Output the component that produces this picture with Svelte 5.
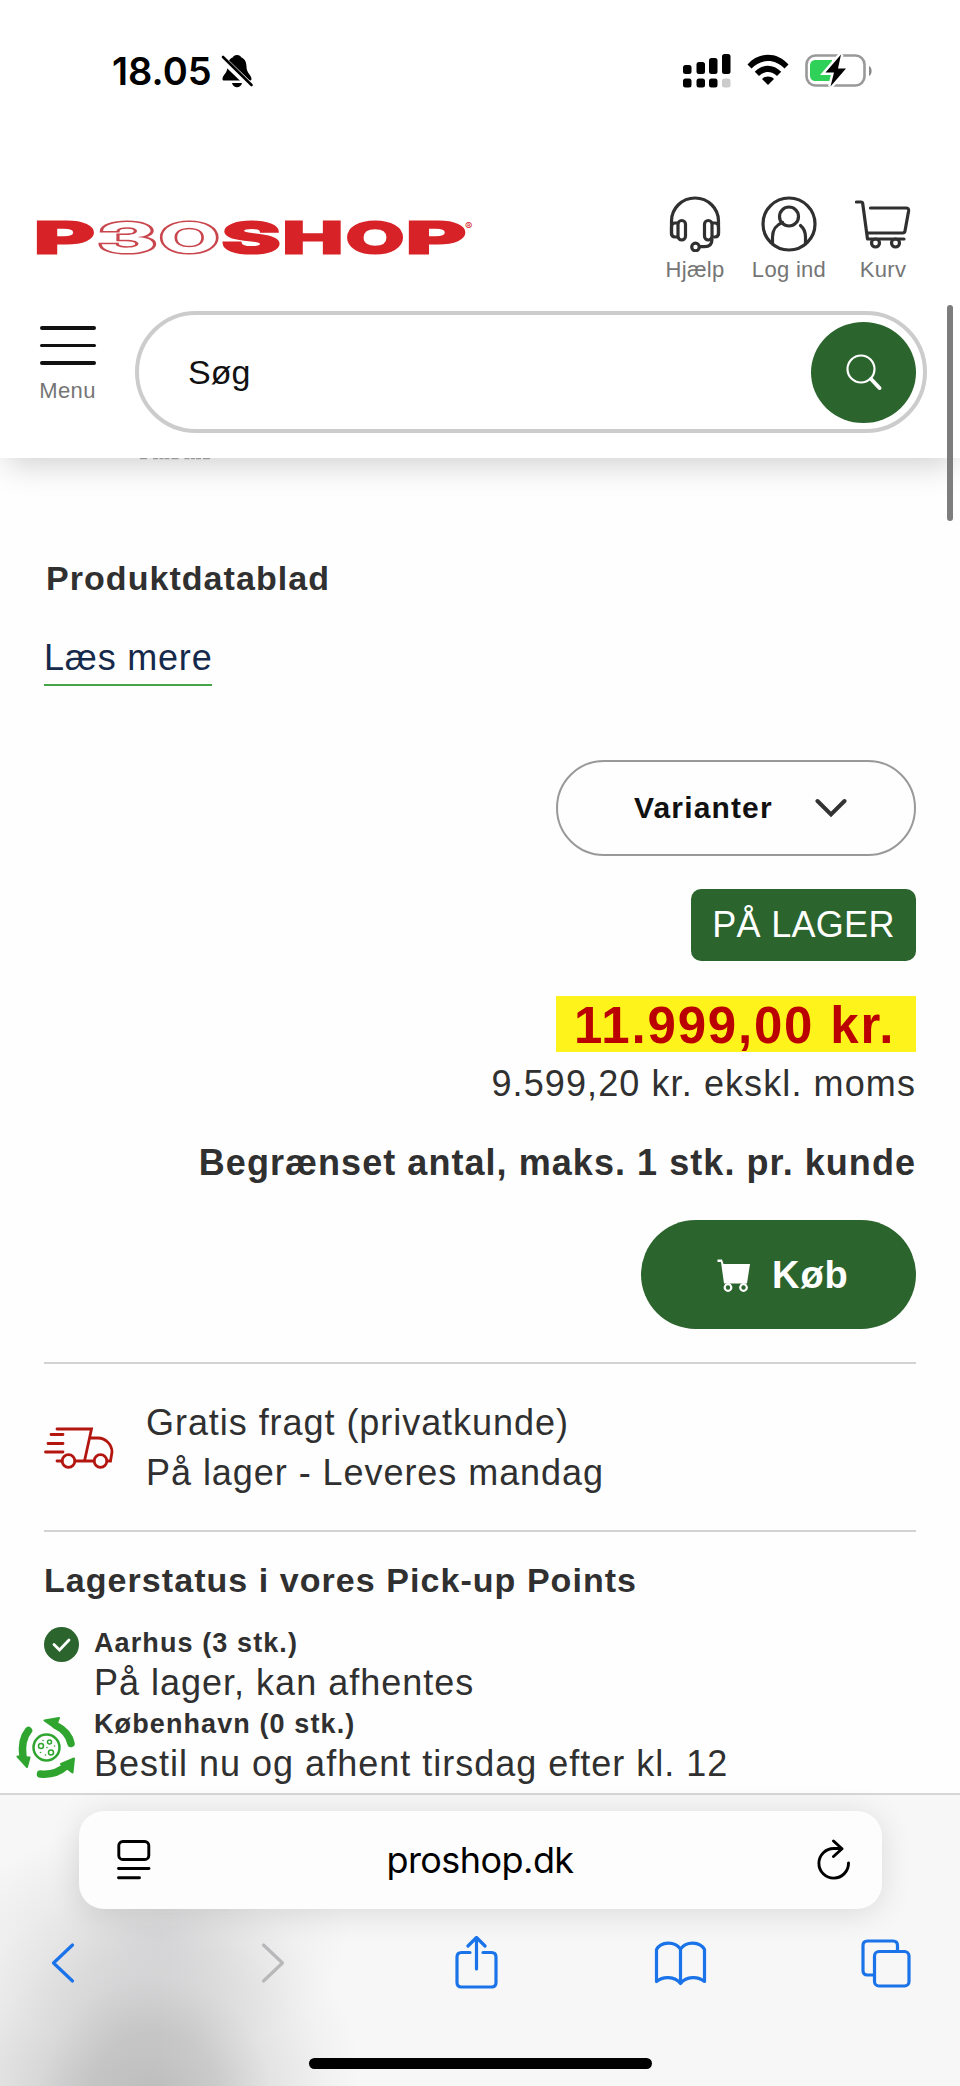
<script lang="ts">
  let query = $state("");

  const signal = [
    { x: 0, y: 11, h: 9 },
    { x: 13.5, y: 8, h: 12 },
    { x: 26, y: 4, h: 16 },
    { x: 39, y: 0, h: 20 },
  ];

  const logo = [
    { letter: "P", x: -4.1, width: 60.3, kind: "solid" },
    { letter: "3", x: 59.3, width: 60, kind: "outline" },
    { letter: "O", x: 121, width: 60.5, kind: "outline" },
    { letter: "S", x: 184, width: 58.2, kind: "solid" },
    { letter: "H", x: 244.6, width: 60.7, kind: "solid" },
    { letter: "O", x: 308.2, width: 57.6, kind: "solid" },
    { letter: "P", x: 368, width: 59.7, kind: "solid" },
  ];

  const stores = [
    { name: "Aarhus", count: 3, status: "På lager, kan afhentes", ready: true },
    { name: "København", count: 0, status: "Bestil nu og afhent tirsdag efter kl. 12", ready: false },
  ];
</script>

<main>
  <header>
    <div class="statusbar">
      <div class="clock">
        <span>18.05</span>
        <svg width="32" height="34" viewBox="0 0 32 34">
          <path d="M16 1c-2.500 0-3.500 1-4 2.200C7.500 5 6.500 9 6.500 13c0 6-5 8-5 12 0 1 .7 1.600 1.700 1.600h25.600c1 0 1.700-.6 1.700-1.600 0-4-5-6-5-12 0-4-1-8-5.500-9.800C19.500 2 18.500 1 16 1z" />
          <path d="M11 29h10c-.5 2.500-2.500 4.300-5 4.300S11.500 31.500 11 29z" />
          <path d="M-1 2.500L30 32.500" stroke="#fff" stroke-width="7" />
          <path d="M2 3L30.500 31" stroke="#000" stroke-width="2.600" stroke-linecap="round" />
        </svg>
      </div>
      <div class="indicators">
        <svg width="50" height="34" viewBox="0 0 50 34">
          {#each signal as bar, i}
            <rect x={bar.x} y={bar.y} width="8.500" height={bar.h} rx="2.500" />
            <rect x={bar.x} y="24.500" width="8.500" height="9" rx="2.500" fill={i === 3 ? "#ccc" : "#000"} />
          {/each}
        </svg>
        <svg width="42" height="32" viewBox="0 0 42 32">
          <path d="M0.500 10.500C12-2.500 30-2.500 41.500 10.500L37.500 14.500C28 4.500 14 4.500 4.500 14.500z" />
          <path d="M7.800 17.800C15.500 9.800 26.500 9.800 34.200 17.800L30 22C24.500 16.700 17.500 16.700 12 22z" />
          <path d="M15 25C18.500 21.800 23.500 21.800 27 25L21 31z" />
        </svg>
        <svg class="battery" width="68" height="34" viewBox="0 0 68 34" fill="none">
          <rect x="1.500" y="1.500" width="58" height="30" rx="9" stroke="#999" stroke-width="2.600" />
          <path d="M64 12c3.500 1.500 3.500 8.500 0 10z" fill="#888" />
          <path d="M11 6h16v21H11c-4 0-6-2-6-6V12c0-4 2-6 6-6z" fill="#30d158" />
          <path d="M36 0.500L20.500 18.500H29L25.500 32.500 41 14.500H33z" fill="#000" stroke="#fff" stroke-width="5" paint-order="stroke" />
        </svg>
      </div>
    </div>

    <div class="brandrow">
      <svg class="logo" width="446" height="50" viewBox="0 0 446 50">
        {#each logo as part}
          <text class={part.kind} x={part.x} y="40.500" textLength={part.width} lengthAdjust="spacingAndGlyphs">{part.letter}</text>
        {/each}
        <text class="reg" x="427" y="18">®</text>
      </svg>
      <nav>
        <a href="#help">
          <svg width="56" height="56" viewBox="0 0 56 56">
            <path d="M5 38V24.500a23.500 23 0 0 1 47 0V38" transform="translate(-.5 .5)" />
            <path d="M10.500 27H8q-3.500 0-3.500 4v6q0 4 3.500 4h2.500M45.500 27H48q3.500 0 3.500 4v6q0 4-3.500 4h-2.500" />
            <rect x="11" y="24.500" width="7.500" height="19.500" rx="3.700" />
            <rect x="37.500" y="24.500" width="7.500" height="19.500" rx="3.700" />
            <path d="M45 43.500c0 5-2.500 7.200-7.500 7.200H33" />
            <circle cx="28.500" cy="51" r="3.800" />
          </svg>
          <span>Hjælp</span>
        </a>
        <a href="#login">
          <svg width="56" height="56" viewBox="0 0 56 56">
            <circle cx="28" cy="28" r="26" />
            <circle cx="28" cy="20.500" r="9.500" />
            <path d="M11.500 48V41c0-7 4-12.500 10-14.500M44.500 48V41c0-5-1.500-8.500-5-11.500" />
          </svg>
          <span>Log ind</span>
        </a>
        <a href="#cart">
          <svg width="56" height="56" viewBox="0 0 56 56">
            <path d="M1.500 6H6q1.500 0 1.700 1.500L12.500 43H49" />
            <path d="M15.500 12H51q3 0 2.600 3L50 35q-.4 2-2.400 2H12.500" />
            <circle cx="20.500" cy="47" r="4" />
            <circle cx="40.500" cy="47" r="4" />
          </svg>
          <span>Kurv</span>
        </a>
      </nav>
    </div>

    <div class="searchrow">
      <button class="menu">
        <i></i><i></i><i></i>
        <span>Menu</span>
      </button>
      <div class="search">
        <input bind:value={query} placeholder="Søg" />
        <button aria-label="Søg">
          <svg width="38" height="38" viewBox="0 0 38 38" fill="none" stroke="#fff" stroke-linecap="round">
            <circle cx="16" cy="16" r="13.500" stroke-width="2.200" />
            <path d="M26 26l8.500 9" stroke-width="4" />
          </svg>
        </button>
      </div>
    </div>
  </header>

  <section class="product">
    <svg class="clipped" width="74" height="2" viewBox="0 0 74 2">
      <path d="M0 .7h74" stroke="#888" stroke-dasharray="7 6 5 1.500 4 1 5 2" />
    </svg>
    <h2 class="datasheet">Produktdatablad</h2>
    <a class="more" href="#more">Læs mere</a>

    <div class="buy">
      <button class="variants">
        Varianter
        <svg width="32" height="20" viewBox="0 0 32 20">
          <path d="M2.500 3L16 16.500 29.500 3" fill="none" stroke="#333" stroke-width="4" stroke-linecap="round" />
        </svg>
      </button>
      <div class="stock">PÅ LAGER</div>
      <div class="price">11.999,00 kr.</div>
      <div class="exvat">9.599,20 kr. ekskl. moms</div>
      <div class="limit">Begrænset antal, maks. 1 stk. pr. kunde</div>
      <button class="add">
        <svg width="34" height="34" viewBox="0 0 34 34">
          <path d="M.5.500H5L6.500 5H33L30 24.500H7L4 3H.5z" fill="#fff" />
          <circle cx="11" cy="28.500" r="3.300" />
          <circle cx="26.500" cy="28.500" r="3.300" />
        </svg>
        Køb
      </button>
    </div>

    <div class="shipping">
      <svg width="70" height="42" viewBox="0 0 70 42" fill="none" stroke="#b3150f" stroke-width="2.800" stroke-linecap="round">
        <path d="M13 2H47.500L40.500 34M46 11H54c8 0 14 7 14 14L66.500 34H63M50 34H31M18 34H13" />
        <path d="M7 7.500H19M4 16.500H19M1.500 25H19" />
        <circle cx="24.500" cy="34" r="6.300" />
        <circle cx="56.500" cy="34" r="6.300" />
      </svg>
      <div>Gratis fragt (privatkunde)<br />På lager - Leveres mandag</div>
    </div>

    <h2 class="pickup">Lagerstatus i vores Pick-up Points</h2>
    <ul>
      {#each stores as store}
        <li>
          <div class="mark">
            {#if store.ready}
              <svg width="35" height="35" viewBox="0 0 35 35">
                <circle cx="17.500" cy="17.500" r="17.500" fill="#2b642d" />
                <path d="M10 17.500l5.500 5.500L25 13" fill="none" stroke="#fff" stroke-width="2.800" stroke-linecap="round" />
              </svg>
            {/if}
          </div>
          <div>
            <b>{store.name} ({store.count} stk.)</b>
            <p>{store.status}</p>
          </div>
        </li>
      {/each}
    </ul>

    <!-- cookie settings button -->
    <svg class="cookie" width="60" height="62" viewBox="0 0 60 62">
      <g fill="none" stroke="#2fa52f" stroke-width="7.500" stroke-linecap="round">
        <path d="M40 8.500C48 12.500 53.500 19 55 26.500" />
        <path d="M24.500 57C35 58 44 54.500 50 49" />
        <path d="M12.500 13.500C7 20 5.500 29 7 40" />
      </g>
      <path d="M28.500 3.500l14.500-2.500-4 10zM45 47l13-5.500-1.500 14zM1.500 39.500l12 1-2.500 9.500z" fill="#2fa52f" stroke="#2fa52f" stroke-width="2" stroke-linejoin="round" />
      <g fill="none" stroke="#2fa52f">
        <circle cx="30.500" cy="30.500" r="13" stroke-width="2.500" />
        <circle cx="25" cy="29" r="2.500" stroke-width="1.500" />
        <circle cx="33.500" cy="25" r="2" stroke-width="1.500" />
        <circle cx="35" cy="35.500" r="2.500" stroke-width="1.500" />
      </g>
      <g fill="#2fa52f">
        <circle cx="27" cy="23.500" r=".8" /><circle cx="31" cy="30.500" r=".8" /><circle cx="24.500" cy="35.500" r=".8" />
        <circle cx="38.500" cy="29" r=".8" /><circle cx="29.500" cy="38" r=".8" />
      </g>
    </svg>
  </section>

  <footer>
    <div class="address">
      <svg width="34" height="40" viewBox="0 0 34 40">
        <rect x="1.800" y="1.500" width="30" height="18" rx="4" />
        <path d="M1.500 28.500h30.500M1.500 37.800h21" />
      </svg>
      <span>proshop.dk</span>
      <svg width="34" height="42" viewBox="0 0 34 42">
        <path d="M31.500 24A14.800 14.800 0 1 1 17 9.500h7" />
        <path d="M16.500 2L25 9.800 16.500 17.500" />
      </svg>
    </div>
    <div class="tools">
      <svg width="54" height="54" viewBox="-15 0 54 54"><path d="M21.500 9L2.500 27l19 18" /></svg>
      <svg width="54" height="54" viewBox="-19 0 54 54" class="off"><path d="M2.500 9l19 18-19 18" /></svg>
      <svg width="54" height="54" viewBox="-6.500 0 54 54">
        <path d="M15.500 16.500H7q-4.500 0-4.500 4.500V46.500q0 4.500 4.500 4.500H37q4.500 0 4.500-4.500V21q0-4.500-4.500-4.500H28.500M22 33V2M13.500 10L22 1.500 30.500 10" />
      </svg>
      <svg width="54" height="54" viewBox="-1 0 54 54">
        <path d="M26.500 47.500C20.500 40 9 40 2.500 45.500V13.500C7 5 21 5 26.500 13 32 5 46 5 50.500 13.500V45.500C44 40 32.500 40 26.500 47.500zM26.500 13V47" />
      </svg>
      <svg width="54" height="54" viewBox="-2 0 54 54">
        <path d="M12.500 39H6.500q-4.500 0-4.500-4.500V9.500Q2 5 6.500 5H32q4.500 0 4.500 4.500V15" />
        <rect x="13.500" y="15.500" width="34.500" height="34.500" rx="4.500" />
      </svg>
    </div>
    <div class="home"></div>
  </footer>

  <div class="scrollbar"></div>
</main>

<style>
  :global(body) {
    margin: 0;
    background: #fff;
  }

  main {
    position: relative;
    display: flex;
    flex-direction: column;
    width: 960px;
    height: 2086px;
    overflow: hidden;
    font-family: "Liberation Sans", Arial, sans-serif;
    font-size: 36px;
    letter-spacing: 0.95px;
    color: #303030;
    background: #fefefe;
  }

  h2, p, ul {
    margin: 0;
    padding: 0;
  }

  button {
    border: none;
    padding: 0;
    font: inherit;
    letter-spacing: inherit;
    background: none;
  }

  a {
    color: inherit;
    text-decoration: none;
  }

  svg {
    display: block;
    flex-shrink: 0;
  }

  header {
    position: relative;
    z-index: 1;
    box-sizing: border-box;
    height: 458px;
    flex-shrink: 0;
    background: #fff;
    box-shadow: 0 14px 30px -7px rgba(0, 0, 0, 0.18);
  }

  .statusbar {
    display: flex;
    justify-content: space-between;
    box-sizing: border-box;
    height: 196px;
    padding: 48px 87px 0 112px;
  }

  .clock {
    display: flex;
    gap: 9px;
    height: 46px;
    font: 600 38px/46px Inter, sans-serif;
    letter-spacing: 0;
    color: #000;
  }

  .clock svg {
    margin-top: 6px;
    overflow: visible;
  }

  .indicators {
    display: flex;
    gap: 14px;
    height: 46px;
    padding-top: 6px;
  }

  .battery {
    margin-left: 2px;
  }

  .brandrow {
    display: flex;
    justify-content: space-between;
    height: 115px;
    padding: 0 35px 0 38px;
  }

  .logo {
    margin-top: 16px;
    overflow: visible;
  }

  .logo text {
    font-family: Inter, sans-serif;
    font-weight: 700;
    font-size: 43px;
    letter-spacing: 0;
  }

  .solid {
    fill: #d72328;
    stroke: #d72328;
    stroke-width: 3px;
  }

  .outline {
    fill: #fff;
    stroke: #c9464d;
    stroke-width: 3px;
    paint-order: stroke;
  }

  .logo .reg {
    font-size: 11px;
    font-weight: normal;
    fill: #d72328;
  }

  nav {
    display: flex;
    gap: 10px;
  }

  nav a {
    display: flex;
    flex-direction: column;
    align-items: center;
    width: 84px;
    font-size: 22px;
    line-height: 24px;
    letter-spacing: 0.3px;
    color: #757575;
  }

  nav span {
    margin-top: 6px;
  }

  nav svg {
    fill: none;
    stroke: #303030;
    stroke-width: 3.2px;
    stroke-linecap: round;
    stroke-linejoin: round;
  }

  .searchrow {
    display: flex;
    gap: 39px;
    padding: 0 33px 0 39px;
  }

  .menu {
    display: flex;
    flex-direction: column;
    align-items: center;
    width: 57px;
    padding-top: 15px;
    font-size: 22px;
    line-height: 24px;
    letter-spacing: 0.4px;
    color: #757575;
  }

  .menu i {
    width: 56px;
    height: 3.5px;
    margin-bottom: 14px;
    border-radius: 2px;
    background: #111;
  }

  .search {
    display: flex;
    align-items: center;
    box-sizing: border-box;
    flex: 1;
    height: 122px;
    padding: 0 7px 0 49px;
    border: 4px solid #ccc;
    border-radius: 61px;
    background: #fff;
  }

  .search input {
    flex: 1;
    min-width: 0;
    border: none;
    padding: 0;
    outline: none;
    font: 34px "Liberation Sans", Arial, sans-serif;
    letter-spacing: 0;
    background: none;
  }

  .search input::placeholder {
    color: #111;
    opacity: 1;
  }

  .search button {
    display: grid;
    place-items: center;
    width: 105px;
    height: 101px;
    border-radius: 50%;
    background: #2b642d;
  }

  .product {
    position: relative;
    box-sizing: border-box;
    height: 1335px;
    flex-shrink: 0;
    padding: 0 44px;
  }

  .clipped {
    position: absolute;
    z-index: 2;
    left: 140px;
    top: 0;
  }

  h2 {
    font-size: 34px;
    letter-spacing: 1.05px;
  }

  .datasheet {
    padding: 100px 0 0 2px;
    line-height: 40px;
  }

  .more {
    display: block;
    width: fit-content;
    margin-top: 39px;
    padding-bottom: 5px;
    border-bottom: 2px solid #46a546;
    line-height: 42px;
    letter-spacing: 0.8px;
    color: #15294b;
  }

  .buy {
    display: flex;
    flex-direction: column;
    align-items: flex-end;
    box-sizing: border-box;
    height: 678px;
    padding-top: 74px;
    border-bottom: 2px solid #d2d2d2;
  }

  .variants {
    display: flex;
    align-items: center;
    gap: 42px;
    box-sizing: border-box;
    flex-shrink: 0;
    width: 360px;
    height: 96px;
    padding-left: 76px;
    border: 2px solid #999;
    border-radius: 48px;
    font-size: 30px;
    font-weight: bold;
    letter-spacing: 1.15px;
    color: #111;
  }

  .stock {
    flex-shrink: 0;
    width: 225px;
    height: 72px;
    margin-top: 33px;
    border-radius: 10px;
    text-align: center;
    line-height: 71px;
    letter-spacing: 0.3px;
    color: #fff;
    background: #2b642d;
  }

  .price {
    box-sizing: border-box;
    flex-shrink: 0;
    width: 360px;
    height: 56px;
    margin-top: 35px;
    padding: 2px 0 0 18px;
    font-size: 51px;
    font-weight: bold;
    line-height: 56px;
    letter-spacing: 1.8px;
    color: #ba0000;
    background: #fff31c;
  }

  .exvat {
    margin-top: 10px;
    line-height: 44px;
    letter-spacing: 1.1px;
  }

  .limit {
    margin-top: 35px;
    font-weight: bold;
    line-height: 44px;
    letter-spacing: 1.05px;
  }

  .add {
    display: flex;
    align-items: center;
    gap: 21px;
    box-sizing: border-box;
    flex-shrink: 0;
    width: 275px;
    height: 109px;
    margin-top: 35px;
    padding: 2px 0 0 76px;
    border-radius: 55px;
    font-size: 38px;
    font-weight: bold;
    color: #fff;
    background: #2b642d;
  }

  .add circle {
    fill: #2b642d;
    stroke: #fff;
    stroke-width: 2.2px;
  }

  .shipping {
    display: flex;
    gap: 32px;
    padding: 34px 0 32px;
    border-bottom: 2px solid #d2d2d2;
    line-height: 50px;
  }

  .shipping svg {
    margin-top: 29px;
  }

  .pickup {
    margin-top: 26px;
    line-height: 44px;
  }

  ul {
    display: flex;
    flex-direction: column;
    gap: 2px;
    margin-top: 23px;
    list-style: none;
  }

  li {
    display: flex;
    gap: 15px;
  }

  .mark {
    width: 35px;
    padding-top: 2px;
  }

  li b {
    display: block;
    font-size: 27px;
    line-height: 37px;
    letter-spacing: 1.1px;
  }

  li p {
    line-height: 42px;
    letter-spacing: 1px;
  }

  .cookie {
    position: absolute;
    left: 16px;
    top: 1259px;
  }

  footer {
    display: flex;
    flex-direction: column;
    align-items: center;
    flex: 1;
    border-top: 2px solid #d6d6d8;
    background:
      radial-gradient(ellipse 210px 215px at 155px 300px, rgba(100, 100, 102, 0.34), rgba(105, 105, 108, 0.27) 30%, rgba(115, 115, 120, 0.12) 55%, rgba(120, 120, 125, 0.03) 82%, transparent),
      radial-gradient(ellipse 300px 230px at 60px 290px, rgba(140, 140, 142, 0.18), rgba(150, 150, 150, 0.06) 60%, transparent),
      radial-gradient(ellipse 190px 120px at 160px 140px, rgba(150, 150, 156, 0.26), rgba(150, 150, 156, 0.1) 55%, transparent),
      #f7f7f7;
  }

  .address {
    display: flex;
    align-items: center;
    justify-content: space-between;
    box-sizing: border-box;
    width: 803px;
    height: 98px;
    margin-top: 16px;
    padding: 0 31px 0 38px;
    border-radius: 25px;
    font-family: Inter, sans-serif;
    letter-spacing: -0.55px;
    color: #000;
    background: #fdfdfd;
    box-shadow: 0 4px 32px rgba(0, 0, 0, 0.12);
  }

  .address span {
    margin-right: 7px;
  }

  .address svg {
    fill: none;
    stroke: #000;
    stroke-width: 2.9px;
    stroke-linecap: round;
    stroke-linejoin: round;
  }

  .tools {
    display: flex;
    justify-content: space-between;
    box-sizing: border-box;
    width: 100%;
    margin-top: 27px;
    padding: 0 47px 0 36px;
  }

  .tools svg {
    fill: none;
    stroke: #1a73e8;
    stroke-width: 3.2px;
    stroke-linecap: round;
    stroke-linejoin: round;
  }

  .tools .off {
    stroke: #b8b8ba;
  }

  .home {
    width: 343px;
    height: 11px;
    margin-top: 68px;
    border-radius: 6px;
    background: #000;
  }

  .scrollbar {
    position: absolute;
    z-index: 2;
    right: 7px;
    top: 305px;
    width: 6px;
    height: 216px;
    border-radius: 3px;
    background: #7d7d7d;
  }
</style>
